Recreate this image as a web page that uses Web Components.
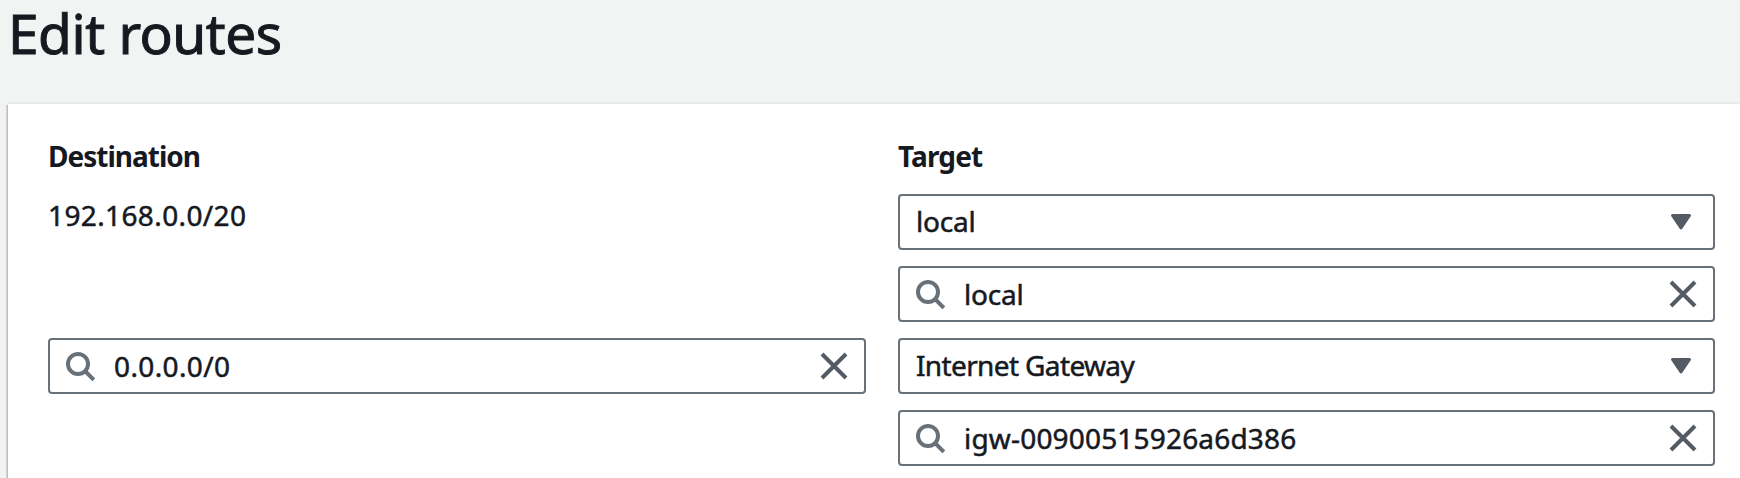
<!DOCTYPE html>
<html lang="en">
<head>
<meta charset="utf-8">
<title>Edit routes</title>
<style>
html,body{margin:0;background:#f2f3f3}
body{font-family:"Noto Sans","Open Sans",sans-serif;font-size:28px;color:#16191f;overflow:hidden}
</style>
</head>
<body>
<routes-page></routes-page>
<script>
const define = (name, html) => customElements.define(name, class extends HTMLElement {
  constructor() {
    super();
    this.attachShadow({mode: 'open'}).innerHTML = html;
  }
});

define('search-icon', `<style>:host{display:block;width:32px;height:32px}svg{display:block}</style>
<svg width="32" height="32" viewBox="0 0 32 32" fill="none" stroke="#687078" stroke-width="4"><circle cx="14" cy="14" r="10"/><path d="M21 21l8.8 8.8"/></svg>`);

define('close-icon', `<style>:host{display:block;width:32px;height:32px}svg{display:block}</style>
<svg width="32" height="32" viewBox="0 0 32 32" fill="none" stroke="#545b64" stroke-width="4"><path d="M4 4l24 24M28 4L4 28"/></svg>`);

define('caret-icon', `<style>:host{display:block;width:32px;height:32px}svg{display:block}</style>
<svg width="32" height="32" viewBox="0 0 32 32" fill="#545b64" stroke="#545b64" stroke-width="3" stroke-linejoin="round"><path d="M7.5 9.5h17L16 22z"/></svg>`);

define('select-field', `<style>
:host{display:flex;box-sizing:border-box;height:56px;border:2px solid #687078;border-radius:4px;background:#fff;align-items:center;justify-content:space-between;padding:0 16px}
.t{line-height:52px;margin-top:-2px;white-space:nowrap}
</style><span class="t"><slot></slot></span><caret-icon></caret-icon>`);

define('search-field', `<style>
:host{display:flex;box-sizing:border-box;height:56px;border:2px solid #687078;border-radius:4px;background:#fff;align-items:center;padding:0 14px}
search-icon{margin-right:18px}
.t{flex:1;line-height:52px;white-space:nowrap}
</style><search-icon></search-icon><span class="t"><slot></slot></span><close-icon></close-icon>`);

define('page-title', `<style>
:host{display:block;height:104px;box-sizing:border-box;padding-left:8px}
h1{margin:0;font-size:55px;font-weight:400;line-height:66px;white-space:nowrap;-webkit-text-stroke:1px currentColor}
</style><h1><slot></slot></h1>`);

define('column-heading', `<style>
:host{display:block;font-weight:700;line-height:36px;height:36px;font-size:28px;white-space:nowrap}
</style><slot></slot>`);

define('route-card', `<style>
:host{display:grid;grid-template-columns:818px 817px;column-gap:32px;align-content:start;box-sizing:border-box;height:374px;margin-left:8px;padding:34px 0 0 40px;background:#fff;box-shadow:-1px 1px 0 0 #b9bfc0,-2px 1px 1px 0 #d5d9d9,0 -2px 0 0 #e9ebeb}
</style><slot></slot>`);

define('route-cell', `<style>
:host{display:flex;flex-direction:column;gap:16px;-webkit-text-stroke:.5px currentColor}
:host([first]){padding-top:20px;height:144px;box-sizing:content-box}
::slotted(span){line-height:42px}
</style><slot></slot>`);

define('routes-page', `<style>
:host{display:block;width:1740px;height:478px;overflow:hidden;background:#f2f3f3}
span{white-space:nowrap}
.title{letter-spacing:-.47px}
.destination{letter-spacing:-1px}
.target{letter-spacing:-.85px}
.cidr{letter-spacing:.38px}
.name{letter-spacing:-.2px}
.gateway{letter-spacing:-.63px}
.id{letter-spacing:.18px}
</style>
<page-title><span class="title">Edit routes</span></page-title>
<route-card>
<column-heading><span class="destination">Destination</span></column-heading><column-heading><span class="target">Target</span></column-heading>
<route-cell first><span class="cidr">192.168.0.0/20</span></route-cell>
<route-cell first><select-field><span class="name">local</span></select-field><search-field><span class="name">local</span></search-field></route-cell>
<route-cell><search-field><span class="cidr">0.0.0.0/0</span></search-field></route-cell>
<route-cell><select-field><span class="gateway">Internet Gateway</span></select-field><search-field><span class="id">igw-00900515926a6d386</span></search-field></route-cell>
</route-card>`);
</script>
</body>
</html>
